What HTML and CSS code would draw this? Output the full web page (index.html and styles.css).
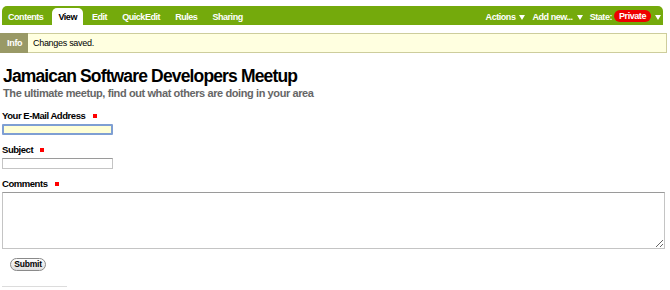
FILE: index.html
```html
<!DOCTYPE html>
<html lang="en">
<head>
  <meta charset="UTF-8" />
  <title>Jamaican Software Developers Meetup</title>
  <link rel="stylesheet" href="styles.css">
</head>
<body>
  <!-- Content views bar -->
  <div class="views-bar">
    <ul class="tabs">
      <li>Contents</li>
      <li class="selected">View</li>
      <li>Edit</li>
      <li>QuickEdit</li>
      <li>Rules</li>
      <li>Sharing</li>
    </ul>
    <ul class="actions">
      <li>Actions <span class="arrow"></span></li>
      <li>Add new... <span class="arrow"></span></li>
      <li>State: <span class="state">Private</span> <span class="arrow"></span></li>
    </ul>
  </div>

  <!-- Status message -->
  <div class="message">
    <span class="message-type">Info</span>
    <span class="message-text">Changes saved.</span>
  </div>

  <h1>Jamaican Software Developers Meetup</h1>
  <p class="description">The ultimate meetup, find out what others are doing in your area</p>

  <form class="form">
    <div class="field">
      <label>Your E-Mail Address <span class="required"></span></label>
      <input type="text" class="input focused">
    </div>
    <div class="field">
      <label>Subject <span class="required"></span></label>
      <input type="text" class="input">
    </div>
    <div class="field">
      <label>Comments <span class="required"></span></label>
      <textarea class="comments"></textarea>
    </div>
    <div class="form-actions">
      <button type="button" class="submit">Submit</button>
    </div>
  </form>

  <div class="rule"></div>
</body>
</html>
```

FILE: styles.css
```css
body {
  font-family: 'Liberation Sans', Arial, sans-serif;
  margin: 0;
  padding: 6px 0 0 0;
  background-color: #fff;
  color: #000;
  font-size: 11px;
}
.views-bar {
  display: flex;
  justify-content: space-between;
  height: 19px;
  width: 661px;
  margin-left: 2px;
  background-color: #74aa0c;
  border-radius: 5px 5px 0 0;
}
.tabs, .actions {
  list-style: none;
  margin: 0;
  padding: 0;
  display: flex;
}
.tabs li {
  color: #fff;
  font-weight: bold;
  font-size: 9px;
  letter-spacing: -0.45px;
  line-height: 12px;
  padding: 5px 7.5px 0;
}
.tabs li:first-child {
  padding-left: 6px;
}
.tabs li.selected {
  background-color: #fff;
  color: #000;
  border-radius: 5px 5px 0 0;
  margin: 2px 1.5px 0;
  padding: 3px 6px 0;
}
.actions {
  padding-right: 2px;
}
.actions li {
  color: #fff;
  font-weight: bold;
  font-size: 9px;
  letter-spacing: -0.45px;
  line-height: 12px;
  padding-top: 5px;
  margin-left: 7px;
}
.arrow {
  display: inline-block;
  width: 0;
  height: 0;
  border-left: 3px solid transparent;
  border-right: 3px solid transparent;
  border-top: 5px solid #fff;
  margin-left: 2px;
  vertical-align: 0;
}
.state {
  display: inline-block;
  background-color: #ee0000;
  color: #fff;
  border-radius: 6px;
  padding: 0 5px;
  line-height: 12px;
  margin-top: -1px;
  vertical-align: top;
}
.message {
  display: flex;
  margin-top: 8px;
  width: 665px;
  height: 18px;
  border: 1px solid #cdcd9c;
  background-color: #ffffe0;
  font-size: 9px;
  letter-spacing: -0.3px;
  line-height: 18px;
}
.message-type {
  background-color: #999966;
  color: #fff;
  font-weight: bold;
  width: 28px;
  margin: -1px 0 -1px -1px;
  padding: 1px 0 0 7px;
  box-sizing: border-box;
}
.message-text {
  padding-left: 5px;
}
h1 {
  font-size: 17.5px;
  letter-spacing: -0.85px;
  line-height: 20px;
  margin: 13px 0 0 3px;
}
.description {
  font-size: 11px;
  font-weight: bold;
  letter-spacing: -0.4px;
  line-height: 14px;
  color: #666;
  margin: 0 0 0 3px;
}
.form {
  margin: 10px 0 0 2px;
}
.field {
  margin-bottom: 9px;
}
.field label {
  display: block;
  font-weight: bold;
  font-size: 9.5px;
  letter-spacing: -0.45px;
  line-height: 12px;
  margin-bottom: 2px;
}
.required {
  display: inline-block;
  width: 4px;
  height: 4px;
  background-color: #f00;
  margin-left: 5px;
  vertical-align: 1px;
}
.input {
  display: block;
  box-sizing: border-box;
  width: 111px;
  height: 11px;
  border: 1px solid #c4c4c4;
  border-top-color: #9a9a9a;
  padding: 0;
  margin: 0;
  background-color: #fff;
  font-size: 9px;
}
.input.focused {
  background-color: #ffffd6;
  border: 2px solid #7f9fd3;
  border-radius: 1px;
  height: 11px;
  margin: 2px 0 0;
}
.comments {
  display: block;
  box-sizing: border-box;
  width: 663px;
  height: 57px;
  border: 1px solid #c4c4c4;
  border-top-color: #9a9a9a;
  padding: 0;
  margin: 0;
  resize: both;
}
.form-actions {
  padding-left: 8px;
  margin-top: 2px;
}
.submit {
  display: block;
  box-sizing: border-box;
  font-family: 'Liberation Sans', Arial, sans-serif;
  font-size: 8.5px;
  font-weight: bold;
  letter-spacing: -0.2px;
  background: linear-gradient(#fdfdfd, #dedede);
  border: 1px solid #8a8a8a;
  border-radius: 7px;
  width: 36px;
  height: 13px;
  padding: 0;
  line-height: 11px;
  color: #000;
}
.rule {
  width: 65px;
  border-top: 1px solid #dcdcdc;
  margin: 15px 0 0 2px;
}
```
